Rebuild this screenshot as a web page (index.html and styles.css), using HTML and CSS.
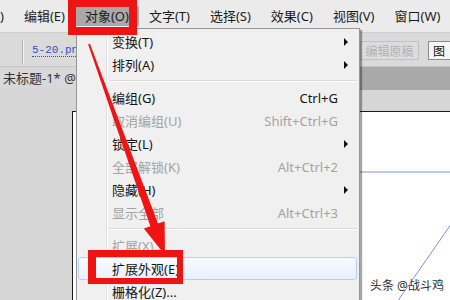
FILE: index.html
```html
<!DOCTYPE html>
<html lang="zh-CN">
<head>
<meta charset="UTF-8" />
<meta name="viewport" content="width=device-width, initial-scale=1" />
<title>对象菜单 - 扩展外观</title>
<link rel="stylesheet" href="styles.css">
</head>
<body>

<div class="app">
  <nav class="menubar">
    <span class="menu-item cut">)</span>
    <span class="menu-item">编辑(E)</span>
    <span class="menu-item active">对象(O)</span>
    <span class="menu-item">文字(T)</span>
    <span class="menu-item">选择(S)</span>
    <span class="menu-item">效果(C)</span>
    <span class="menu-item">视图(V)</span>
    <span class="menu-item">窗口(W)</span>
  </nav>

  <div class="toolbar">
    <span class="tool-grip"></span>
    <a class="doc-link">5-20.pn</a>
    <button class="tb-btn disabled">编辑原稿</button>
    <button class="tb-btn">图</button>
  </div>

  <div class="tabs">
    <span class="tab">未标题-1* @</span>
  </div>

  <div class="workspace">
    <div class="artboard">
      <svg class="guides" width="400" height="200" viewBox="0 0 400 200">
        <line x1="280" y1="60" x2="400" y2="60" stroke="#7f90e6" stroke-width="1" />
        <line x1="381" y1="108" x2="324" y2="190" stroke="#7f90e6" stroke-width="1" />
      </svg>
    </div>
  </div>

  <ul class="dropdown">
    <li class="row"><span></span><span class="label">变换(T)</span><span class="key"></span><span class="sub"></span></li>
    <li class="row"><span></span><span class="label">排列(A)</span><span class="key"></span><span class="sub"></span></li>
    <li class="sep"></li>
    <li class="row"><span></span><span class="label">编组(G)</span><span class="key">Ctrl+G</span><span></span></li>
    <li class="row off"><span></span><span class="label">取消编组(U)</span><span class="key">Shift+Ctrl+G</span><span></span></li>
    <li class="row"><span></span><span class="label">锁定(L)</span><span class="key"></span><span class="sub"></span></li>
    <li class="row off"><span></span><span class="label">全部解锁(K)</span><span class="key">Alt+Ctrl+2</span><span></span></li>
    <li class="row"><span></span><span class="label">隐藏(H)</span><span class="key"></span><span class="sub"></span></li>
    <li class="row off"><span></span><span class="label">显示全部</span><span class="key">Alt+Ctrl+3</span><span></span></li>
    <li class="sep"></li>
    <li class="row off"><span></span><span class="label">扩展(X)...</span><span class="key"></span><span></span></li>
    <li class="row hl"><span></span><span class="label">扩展外观(E)</span><span class="key"></span><span></span></li>
    <li class="row"><span></span><span class="label">栅格化(Z)...</span><span class="key"></span><span></span></li>
  </ul>

  <!-- annotations -->
  <div class="mark mark-menu"></div>
  <div class="mark mark-item"></div>
  <svg class="arrow" width="450" height="300" viewBox="0 0 450 300">
    <polygon points="89.9,43.7 158,223.5 164.6,221.2 165,255 143.8,228.6 150.4,226.3 88.1,44.3" fill="#ee1414" />
  </svg>
  <span class="watermark">头条 @战斗鸡</span>
</div>

</body>
</html>
```

FILE: styles.css
```css
* {
  box-sizing: border-box;
}
body {
  margin: 0;
  font-family: "Noto Sans", "Noto Sans CJK SC", sans-serif;
  color: #111;
}
.app {
  position: relative;
  width: 450px;
  height: 300px;
  overflow: hidden;
  display: flex;
  flex-direction: column;
  background: #d6d6d6;
}

/* menu bar */
.menubar {
  height: 33px;
  flex-shrink: 0;
  display: flex;
  align-items: center;
  background: #ebebeb;
  border-bottom: 1px solid #cdcdcd;
  font-size: 13px;
  white-space: nowrap;
}
.menu-item {
  height: 20px;
  line-height: 20px;
  padding: 0 10px;
  color: #1c1c1c;
}
.menu-item.cut {
  padding-left: 0;
}
.menu-item.active {
  background: #a9a9a9;
}

/* control bar */
.toolbar {
  height: 34px;
  flex-shrink: 0;
  display: flex;
  align-items: center;
  background: #dadada;
  border-bottom: 1px solid #c4c4c4;
  white-space: nowrap;
}
.tool-grip {
  width: 2px;
  height: 24px;
  margin: 4px 8px 0 22px;
  border-left: 1px solid #b4b4b4;
  border-right: 1px solid #f2f2f2;
}
.doc-link {
  font-family: "Liberation Mono", monospace;
  font-size: 11px;
  color: #3550c8;
  border-bottom: 1px dotted #3550c8;
  margin-top: 2px;
}
.tb-btn {
  flex-shrink: 0;
  height: 19px;
  padding: 0 4px;
  font: 12px "Noto Sans CJK SC", sans-serif;
  border: 1px solid #8a8a8a;
  background: #f7f7f7;
  color: #111;
  margin-top: 2px;
}
.tb-btn.disabled {
  margin-left: auto;
  width: 59px;
  color: #b3b3b3;
  background: #dcdcdc;
  border-color: #c2c2c2;
}
.tb-btn:last-child {
  width: 22px;
  margin-left: 9px;
  border-right: none;
  text-align: left;
}

/* document tabs */
.tabs {
  height: 23px;
  flex-shrink: 0;
  background: #a9a9a9;
  display: flex;
}
.tab {
  width: 76px;
  padding-left: 3px;
  line-height: 22px;
  font-size: 13px;
  color: #333;
  background: #d8d8d8;
  white-space: nowrap;
  overflow: hidden;
}

/* canvas */
.workspace {
  flex: 1;
  padding: 21px 0 0 72px;
  background: #d6d6d6;
  overflow: hidden;
}
.artboard {
  position: relative;
  width: 420px;
  height: 100%;
  background: #fff;
  border-left: 1px solid #1a1a1a;
  border-top: 1px solid #1a1a1a;
}
.guides {
  position: absolute;
  left: 0;
  top: 0;
}

/* object menu */
.dropdown {
  position: absolute;
  left: 76px;
  top: 28px;
  width: 284px;
  height: 290px;
  margin: 0;
  padding: 1px 0;
  list-style: none;
  border: 1px solid #979797;
  box-shadow: 2px 2px 1px rgba(0,0,0,0.35);
  background:
    linear-gradient(to right, transparent 29px, #e2e3e3 29px, #e2e3e3 30px, #fff 30px, #fff 31px, transparent 31px),
    #f0f0f0;
  font-size: 13px;
}
.row {
  height: 23px;
  display: grid;
  grid-template-columns: 35px 1fr auto 21px;
  align-items: center;
  white-space: nowrap;
  color: #151515;
}
.row.off {
  color: #a3a3a3;
}
.row.hl {
  margin: 0 2px 0 1px;
  grid-template-columns: 33px 1fr auto 18px;
  border: 1px solid #b3d0f2;
  border-radius: 3px;
  background: linear-gradient(#f7fafe, #eaf1fb);
}
.key {
  text-align: right;
}
.sub {
  justify-self: start;
  margin-left: 6px;
  width: 0;
  height: 0;
  border-left: 4px solid #111;
  border-top: 4px solid transparent;
  border-bottom: 4px solid transparent;
}
.sep {
  height: 10px;
  margin-left: 33px;
  margin-right: 2px;
  background: linear-gradient(transparent 4px, #dadada 4px, #dadada 5px, #fff 5px, #fff 6px, transparent 6px);
}

/* red annotations */
.mark {
  position: absolute;
  border: 8px solid #ee1414;
}
.mark-menu {
  left: 68px;
  top: -1px;
  width: 69px;
  height: 36px;
}
.mark-item {
  left: 88px;
  top: 250px;
  width: 95px;
  height: 34px;
  border-width: 7px 6px 6px 8px;
}
.arrow {
  position: absolute;
  left: 0;
  top: 0;
  pointer-events: none;
}
.watermark {
  position: absolute;
  left: 370px;
  top: 276px;
  font-size: 12px;
  color: #2e2e2e;
  text-shadow: 0 0 2px #fff;
  white-space: nowrap;
}
```
